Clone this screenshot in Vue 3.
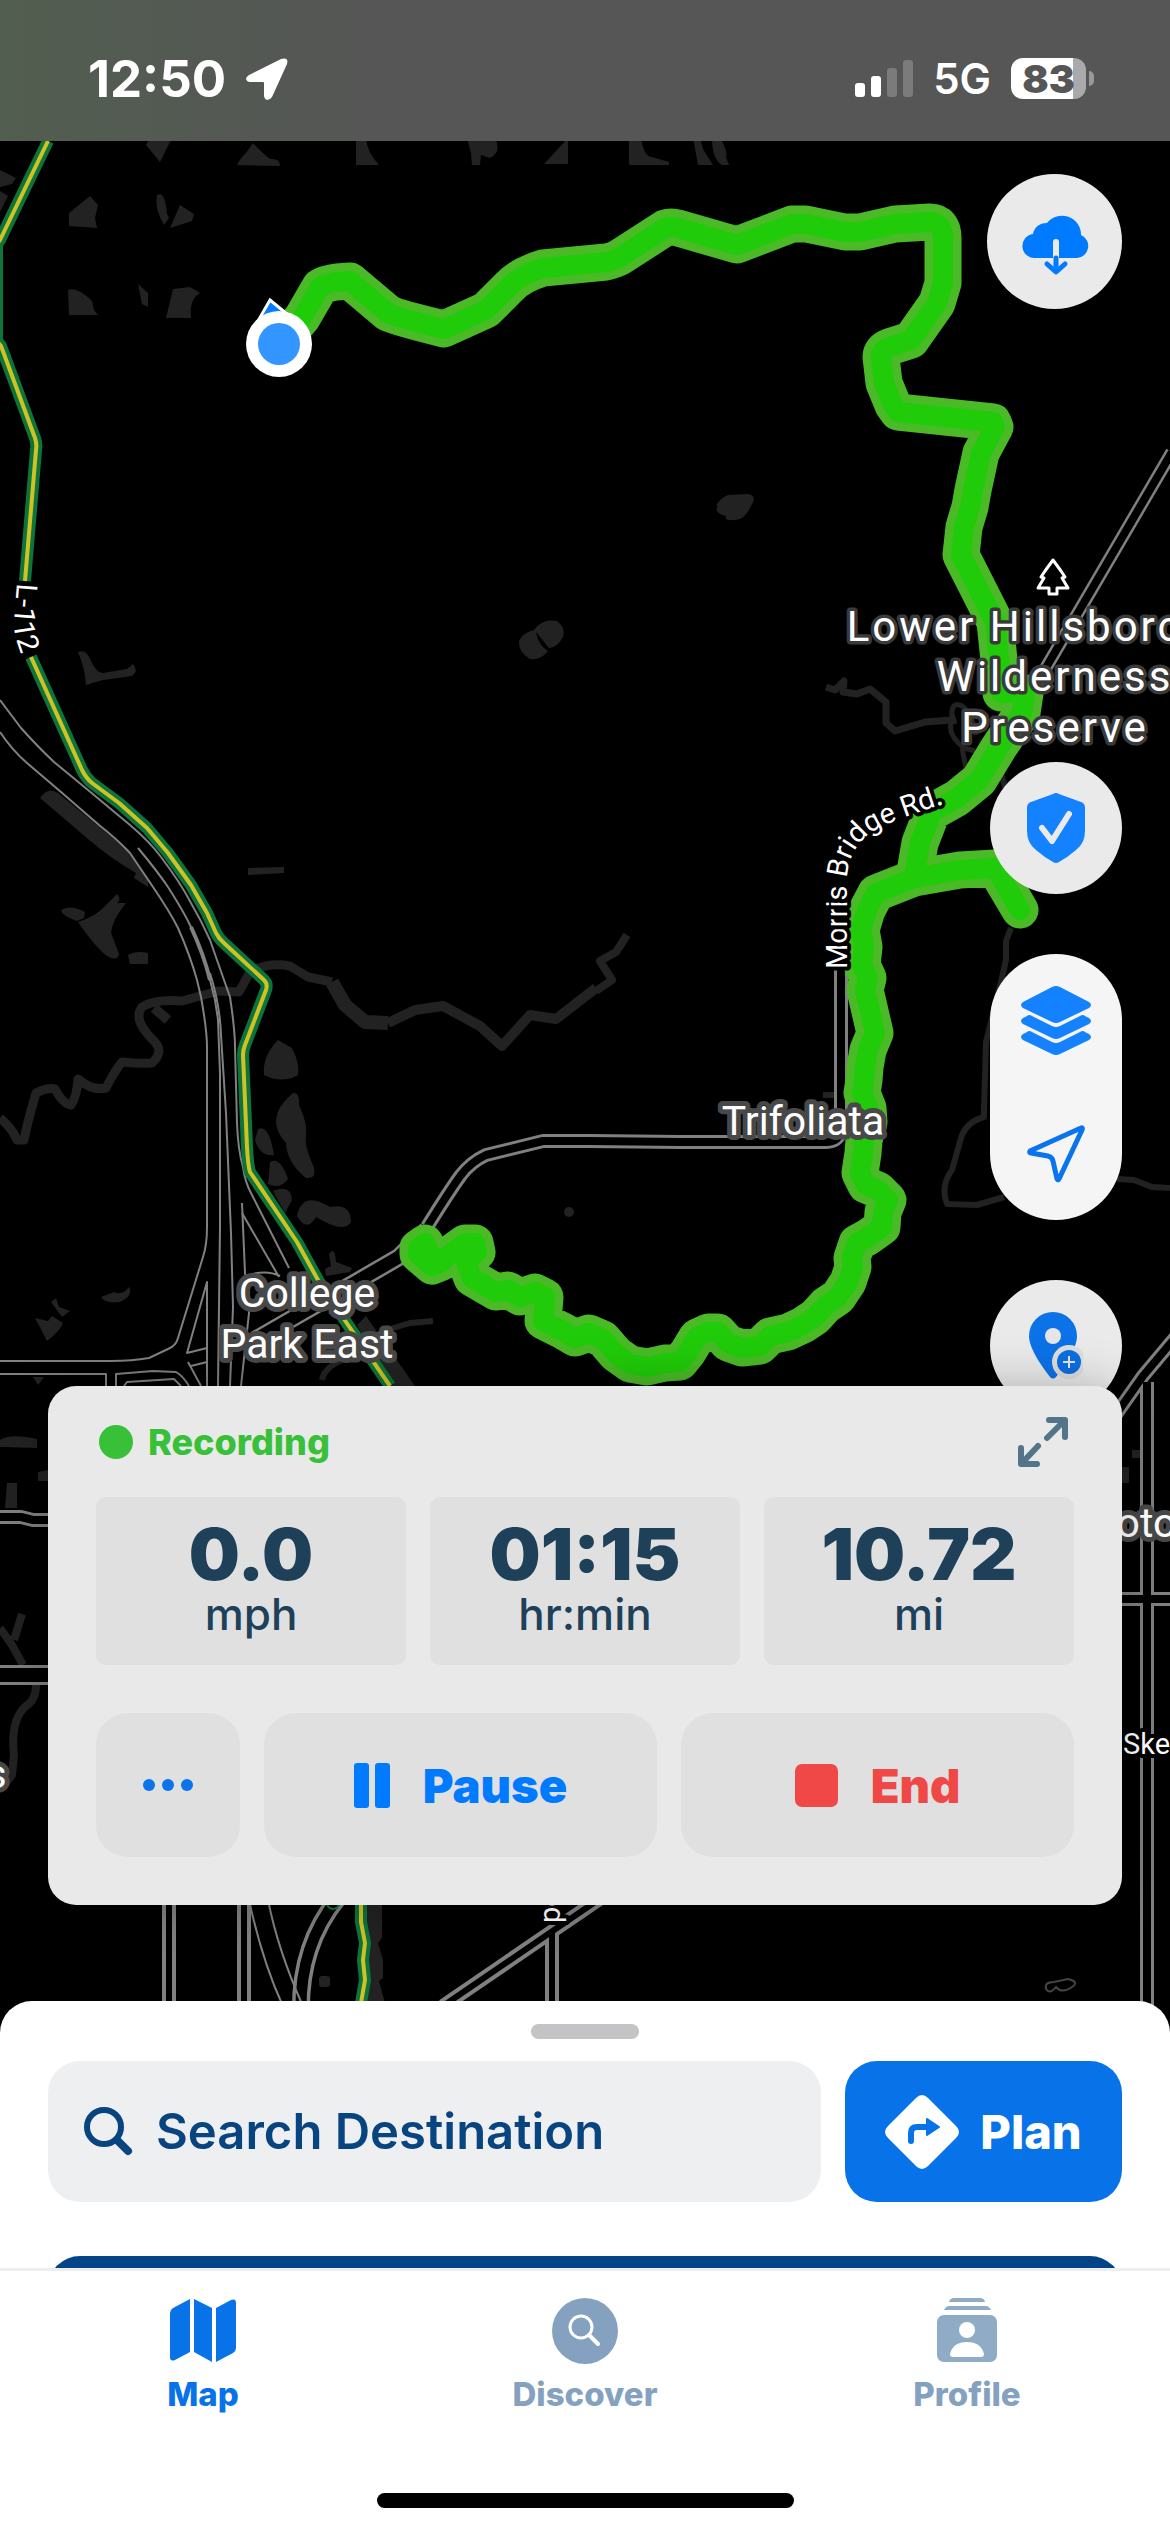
<script setup>
import { ref } from 'vue'

const destination = ref('')

const stats = [
  { value: '0.0', unit: 'mph' },
  { value: '01:15', unit: 'hr:min' },
  { value: '10.72', unit: 'mi' },
]

const track =
  'M1020 910 L995 868 L960 870 L914 878 L876 893 L867 910 L861 930 L864 947 L862 965 L868 978 L865 990 L869 1007 L875 1033 L868 1050 L865 1067 L864 1080 L862 1093 L868 1108 L869 1122 L864 1140 L863 1153 L860 1173 L866 1185 L878 1190 L888 1200 L883 1212 L882 1227 L868 1237 L857 1243 L852 1258 L853 1267 L848 1282 L838 1297 L826 1305 L815 1317 L803 1325 L788 1332 L770 1336 L760 1346 L742 1348 L728 1343 L718 1332 L708 1332 L697 1337 L688 1352 L680 1362 L665 1363 L647 1367 L630 1364 L616 1354 L603 1339 L589 1333 L575 1338 L563 1331 L543 1321 L545 1297 L535 1292 L520 1297 L508 1290 L496 1292 L472 1278 L466 1262 L477 1252 L475 1243 L465 1243 L447 1256 L442 1262 L432 1266 L418 1254 L418 1248 L425 1243 L432 1258'
const trackNorth =
  'M279 344 L302 318 L320 287 Q326 282 350 281 L388 313 Q395 317 444 329 L486 310 L509 287 Q520 275 543 268 L606 262 Q615 260 620 257 L665 228 Q671 226 678 228 L737 245 L792 224 L806 224 L845 232 L860 232 L895 224 L930 222 Q943 222 943 238 L943 283 L937 303 L911 340 L889 347 Q881 350 881 357 L884 383 L893 405 L898 412 L993 422 L995 427 L981 453 L973 490 L970 507 L964 527 L961 555 L995 622 L999 660 L1001 693 L1025 693 L1022 713 L999 747 L979 780 L957 798 L932 812 L920 843 L914 878'
const trail =
  'M48 141 L0 240 Q-3 243 -3 247 V338 Q-3 342 1 346 L35 438 Q37 444 36 450 L25 581'
const trailSouth =
  'M31 657 L82 770 Q86 778 92 783 L119 803 L147 828 L168 853 L191 885 L207 913 L216 933 Q219 939 225 944 L264 980 Q268 984 266 990 L245 1045 Q243 1050 243 1055 L247 1147 Q248 1166 250 1172 L297 1242 L318 1280 L346 1322 L390 1386'
const trailEnd = 'M361 1900 L361 1922 L365 1943 L363 1960 L365 1980 L361 2003'
</script>

<template>
  <div class="app">
    <svg class="map" viewBox="0 0 1170 2532" preserveAspectRatio="xMidYMin slice" aria-label="Map">
      <defs>
        <path id="morris" d="M847 969 V882 Q847 852 868 835 Q884 822 950 802" />
        <path id="l112" d="M17 583 L14 622 Q13 640 32 678" />
      </defs>

      <!-- ponds and woods -->
      <g class="water">
        <path d="M146 145 L150 138 H172 L160 162Z M253 143 Q262 153 270 159 Q280 158 280 166 L237 165 Q241 157 246 153Z M356 138 H366 Q367 152 379 165 H356Z M467 138 H495 Q502 152 490 158 L481 155 L480 165 H472 L471 153Z M568 138 V164 H544Z M629 138 H641 Q644 157 652 157 L669 162 V165 H629Z M693 138 H700 L703 149 L713 165 H698Z M712 138 H720 Q728 151 726 157 L729 165 H722 Q712 159 712 138Z" />
        <path d="M0 170 L16 178 L12 184 L0 187Z M0 191 L8 196 L0 212Z M69 213 L90 196 L98 205 L95 218 L97 228 L69 226Z M157 195 Q165 190 167 214 L169 218 L164 225 Q154 208 157 195Z M180 205 L194 214 L192 221 L170 228Z" />
        <path d="M68 290 Q77 286 92 301 L94 310 L98 315 H69Z M138 284 L148 293 V307 L142 304Z M173 289 L190 287 L200 293 Q189 299 191 318 H166Z" />
        <path d="M78 652 Q86 649 90 659 Q96 673 103 673 L127 669 L133 664 Q139 671 132 676 L103 680 L86 685 Q85 668 78 652Z" />
        <path d="M534 630 Q542 618 557 621 Q566 628 563 637 Q557 648 549 648 L536 632 Q538 645 548 651 Q540 661 530 659 Q518 652 519 641 Q522 633 534 630Z" />
        <path d="M716 505 Q722 497 728 495 L748 494 Q758 496 751 506 Q744 521 734 520 Q724 521 726 516 Q713 513 718 506Z" />
        <path d="M40 798 Q48 786 58 793 L125 848 L148 878 V887 L134 878 L136 873 Q110 858 88 839Z" />
        <path d="M61 910 Q70 904 85 912 L84 918 L77 921 Q62 916 61 910Z M78 922 Q97 916 107 904 L117 894 Q122 899 117 903 H126 Q112 920 111 933 L119 954 Q117 962 107 956 Q95 947 78 922Z M128 955 Q136 950 148 953 V964 H130Z M248 868 L284 867 V873 L248 875Z" />
        <path d="M278 1040 L292 1048 Q300 1064 298 1075 Q282 1084 264 1075 Q262 1056 278 1040Z M293 1093 Q300 1092 299 1105 Q308 1125 306 1135 Q304 1146 313 1165 Q318 1179 306 1178 Q287 1163 286 1143 Q263 1118 293 1093Z M258 1129 Q269 1124 274 1155 Q260 1157 255 1140Z M270 1162 Q280 1156 288 1179 Q280 1190 268 1184Z M273 1191 Q291 1184 292 1200 L285 1213Z M297 1216 Q302 1190 330 1207 Q351 1203 351 1222 Q345 1232 325 1222 L316 1217 Q307 1233 297 1216Z" />
        <path d="M329 1254 Q335 1245 336 1262 L352 1268 L350 1272 L326 1276 L325 1269 L331 1266Z M101 1297 L114 1292 Q122 1296 129 1287 Q134 1295 120 1302 Q105 1304 101 1297Z M51 1302 L56 1298 L59 1307 L70 1311 L62 1317Z M35 1318 L48 1321 L52 1316 L63 1323 Q60 1331 47 1341Z M33 1377 H44 L38 1385Z M357 1325 L366 1316 L415 1386 H389Z" />
        <circle cx="569" cy="1212" r="5" />
        <path d="M823 1092 H834 V1098 H823Z M0 1440 Q10 1433 37 1439 V1448 L0 1447Z M38 1472 L48 1470 V1481 H38Z M7 1483 H17 V1508 H5Z M1132 1450 h10 v8 h-10Z M1122 1467 h7 v16 h-7Z M367 1905 H382 L382 1938 L378 1943 L383 1960 L383 1978 L379 1981 L385 2003 H367Z" />
        <rect x="319" y="1976" width="11" height="11" rx="3" />
      </g>
      <g class="creek">
        <path stroke-width="9" d="M0 1118 Q12 1128 17 1140 H24 Q27 1124 36 1093 Q48 1087 55 1089 Q63 1104 71 1105 Q77 1096 78 1079 Q92 1091 106 1088 Q114 1072 122 1062 Q140 1064 152 1063 Q164 1052 155 1042 Q132 1020 142 1007 Q155 999 182 1001 L218 991 L239 992 L250 972 Q268 962 290 966 L308 977 L332 982" />
        <path stroke-width="14" d="M332 982 L345 1005 L365 1022 L388 1023" />
        <path stroke-width="10" d="M388 1023 L415 1010 L443 1006 L480 1026 L502 1046 L530 1015 L556 1019 L596 988 M154 1008 L168 1020" />
        <path stroke-width="8" d="M596 991 L612 980 L600 961 L616 952 L627 935" />
        <path stroke-width="7" d="M826 687 L835 690 L844 681 L843 692 L857 694 L870 689 L886 702 L886 723 L895 731 L925 722 L952 720" />
        <path stroke-width="5" d="M952 720 Q950 700 962 706 Q972 713 976 735 M952 720 Q946 734 964 748 L975 751 M952 714 L955 724 M962 748 L966 768" />
        <path stroke-width="6" d="M1000 770 L1006 790 M1011 928 L1006 941 L1006 960 L1001 982 L986 1042 L984 1110 L984 1117 Q966 1122 961 1138 L952 1170 Q940 1186 947 1204 L977 1205 L1004 1197 M1117 1179 L1134 1180 L1152 1187 L1170 1188" />
        <path stroke-width="6" d="M387 1330 L410 1323 L433 1321 M322 1380 Q324 1368 342 1360" />
        <path stroke-width="8" d="M0 1628 L12 1645 L23 1665 M14 1640 L22 1614 M36 1685 Q36 1700 26 1706 Q10 1720 14 1755 L12 1775 L0 1790" />
      </g>
      <path class="islet" d="M1046 1989 Q1044 1982 1054 1982 L1068 1979 Q1080 1982 1072 1987 Q1062 1994 1056 1987 Q1050 1995 1046 1989Z" />

      <!-- two-lane roads: casing then core -->
      <g class="casing">
        <path stroke-width="14" d="M841 960 V1128 Q840 1142 826 1142 H681 L589 1141 H543 L486 1155 Q471 1162 461 1175 Q450 1190 427 1227" />
        <path stroke-width="18" d="M427 1230 L399 1257 L356 1282 L300 1314 L255 1340" />
        <path stroke-width="13" d="M1172 452 L1030 695" />
        <path stroke-width="14" d="M0 1517 H21 L33 1520 H60 M1110 1599 H1180 M1147 2010 V1382 M169 1890 V2010 M244 1890 V2010" />
        <path stroke-width="14" d="M1180 1332 L1143 1376 L1112 1420" />
        <path stroke-width="20" d="M0 1675 H60" />
        <path stroke-width="18" d="M338 1898 Q300 1945 301 2010" />
        <path stroke-width="14" d="M552 2010 V1931 M620 1885 L557 1928 L443 2006" />
      </g>
      <g class="core">
        <path stroke-width="8" d="M841 958 V1128 Q840 1142 826 1142 H681 L589 1141 H543 L486 1155 Q471 1162 461 1175 Q450 1190 427 1227" />
        <path stroke-width="13" d="M427 1230 L399 1257 L356 1282 L300 1314 L255 1340" />
        <path stroke-width="8" d="M1172 452 L1030 695" />
        <path stroke-width="8" d="M0 1517 H21 L33 1520 H60 M1110 1599 H1180 M1147 2010 V1382" />
        <path stroke-width="6" d="M169 1890 V2010 M244 1890 V2010" />
        <path stroke-width="8" d="M1180 1332 L1143 1376 L1112 1420" />
        <path stroke-width="14" d="M0 1675 H60" />
        <path stroke-width="11" d="M338 1898 Q300 1945 301 2010" />
        <path stroke-width="6" d="M552 2010 V1931 M620 1885 L557 1928 L443 2006" />
      </g>

      <!-- interstate carriageways -->
      <g class="lines">
        <path d="M0 700 L21 728 Q38 747 54 762 L88 790 L130 825 Q150 842 161 857 Q180 882 191 903 Q202 922 210 940 L224 980 L230 997 Q235 1030 235 1047 L237 1123 Q238 1150 243 1167 Q245 1182 251 1193 L289 1268" />
        <path d="M0 732 Q12 750 27 763 L61 792 L99 825 Q118 840 130 853 L153 887 Q170 912 178 928 Q190 955 197 980 L201 997 Q207 1030 207 1047 V1227 Q207 1245 203 1257 L178 1338 Q176 1346 168 1349 L149 1358 Q132 1361 111 1361 H0" />
        <path d="M138 848 Q158 872 168 887 Q184 912 191 927 Q204 955 210 980 Q216 1000 218 1020 L220 1073 V1227 L218 1386" />
        <path stroke-width="4" d="M191 927 Q204 955 210 980" />
        <path d="M210 973 Q220 1005 221 1035 L226 1113 L231 1233 L233 1307 L230 1386" />
        <path d="M242 1203 L245 1273 L249 1313 L241 1386" />
        <path d="M242 1213 L279 1277 M207 1386 V1282 L187 1353 L207 1348 M252 1274 Q268 1270 280 1276" />
        <path d="M0 1374 H106 V1386 M116 1386 V1374 L153 1371 L176 1372 Q183 1376 189 1386 M124 1386 L127 1382 L174 1379 L181 1386 M188 1362 L201 1386 M191 1366 L207 1362" />
        <path d="M249 1900 Q262 1960 282 2004 M268 1900 Q278 1950 302 2004" />
      </g>

      <g class="trail">
        <path :d="trail" /><path :d="trailSouth" /><path :d="trailEnd" />
        <circle cx="333" cy="1903" r="1" />
      </g>
      <g class="trail-mid">
        <path :d="trail" /><path :d="trailSouth" /><path :d="trailEnd" />
      </g>

      <g class="track-edge"><path :d="trackNorth" /><path :d="track" /></g>
      <g class="track-core"><path :d="trackNorth" /><path :d="track" /></g>

      <!-- current position -->
      <path d="M270 300 L292 318 L254 328Z" fill="#0a7aff" stroke="#fff" stroke-width="3" />
      <circle cx="279" cy="344" r="33" fill="#fff" />
      <circle cx="279" cy="344" r="21" fill="#3395ff" />

      <path class="tree" d="M1053 560 L1045 571 L1041 577 L1044 578 L1038 588 H1049 V594 H1057 V588 H1068 L1062 578 L1065 577 L1061 571Z" />

      <g class="road-label">
        <text><textPath href="#morris">Morris Bridge Rd.</textPath></text>
        <text><textPath href="#l112">L-112</textPath></text>
        <text x="1123" y="1754">Skewlee</text>
        <text transform="translate(560 1923) rotate(-90)">po</text>
      </g>
      <g class="park-label">
        <text x="1055" y="641">Lower Hillsborough</text>
        <text x="1055" y="691">Wilderness</text>
        <text x="1055" y="742">Preserve</text>
      </g>
      <g class="place-label">
        <text x="803" y="1135">Trifoliata</text>
        <text x="307" y="1307">College</text>
        <text x="307" y="1358">Park East</text>
        <text x="1157" y="1537">otos</text>
        <text x="-4" y="1788">s</text>
      </g>
    </svg>

    <header class="status">
      <div class="status-group time">
        <span>12:50</span>
        <svg width="42" height="42" viewBox="0 0 42 42" fill="#fff">
          <path d="M35 1 L3 17 Q0 19 0 21 Q1 24 4 24 H17 Q18 24 18 25 V37 Q18 41 21 42 Q24 42 26 39 L41 6 Q43 -1 35 1Z" />
        </svg>
      </div>
      <div class="status-group">
        <svg width="58" height="38" viewBox="0 0 58 38" fill="#fff">
          <rect y="23" width="10" height="14" rx="3" />
          <rect x="16" y="16" width="10" height="21" rx="3" />
          <rect x="32" y="8" width="10" height="29" rx="3" opacity=".22" />
          <rect x="48" width="10" height="37" rx="3" opacity=".22" />
        </svg>
        <span class="net">5G</span>
        <span class="battery"><b>83</b></span>
      </div>
    </header>

    <main class="overlay">
      <button class="round cloud" aria-label="Download map">
        <svg width="72" height="72" viewBox="0 0 72 72">
          <path fill="#007aff" d="M17 52 A12 12 0 0 1 14 28 A13 13 0 0 1 28 17 A19 19 0 0 1 62 29 A12 12 0 0 1 58 52Z" />
          <path d="M37 36 V52" stroke="#eaeaea" stroke-width="6" stroke-linecap="round" />
          <path d="M37 52 V65 M28 58 L37 66 L46 58" fill="none" stroke="#007aff" stroke-width="5" stroke-linecap="round" stroke-linejoin="round" />
        </svg>
      </button>

      <button class="round shield" aria-label="Safety">
        <svg width="58" height="70" viewBox="0 0 58 70">
          <path fill="#1481ff" d="M26 1 Q29 -1 32 1 L54 9 Q58 10 58 15 V38 Q58 50 49 57 Q41 64 32 69 Q29 71 26 69 Q17 64 9 57 Q0 50 0 38 V15 Q0 10 4 9Z" />
          <path d="M15 35 L25 48 L42 21" fill="none" stroke="#eaeaea" stroke-width="6" stroke-linecap="round" stroke-linejoin="round" />
        </svg>
      </button>

      <div class="pill">
        <button aria-label="Map layers">
          <svg width="70" height="70" viewBox="0 0 70 70" fill="#1481ff">
            <path d="M31 1 Q35 -1 39 1 L68 16 Q72 19 68 22 L39 36 Q35 38 31 36 L2 22 Q-2 19 2 16Z" />
            <path id="sheet-layer" d="M6 30 Q8 28 11 30 L31 40 Q35 42 39 40 L59 30 Q62 28 64 30 L68 32 Q72 35 68 38 L39 52 Q35 54 31 52 L2 38 Q-2 35 2 32Z" />
            <use href="#sheet-layer" y="16" />
          </svg>
        </button>
        <button aria-label="Center on my location">
          <svg width="58" height="58" viewBox="0 0 58 58">
            <path d="M54 3 L3 26 Q2 28 4 28 L21 31 Q25 32 26 36 L30 54 Q31 56 32 54 L55 5 Q56 2 54 3Z" fill="none" stroke="#0a74ee" stroke-width="5" stroke-linejoin="round" />
          </svg>
        </button>
      </div>

      <button class="round pin" aria-label="Add waypoint">
        <svg width="54" height="68" viewBox="0 0 54 68">
          <path fill="#0b72e7" d="M24 0 A24 24 0 0 1 48 24 Q48 38 27 65 Q24 68 21 65 Q0 38 0 24 A24 24 0 0 1 24 0Z" />
          <circle cx="24" cy="24" r="8" fill="#e6e6e6" />
          <circle cx="40" cy="50" r="17" fill="#dedede" />
          <circle cx="40" cy="50" r="12" fill="#0b6fe2" />
          <path d="M34 50 H46 M40 44 V56" stroke="#e6e6e6" stroke-width="2" />
        </svg>
      </button>

      <section class="panel">
        <div class="panel-head">
          <span class="dot"></span>
          <h2>Recording</h2>
          <button class="expand" aria-label="Expand">
            <svg width="50" height="50" viewBox="0 0 50 50" fill="none" stroke="#54748a" stroke-width="6" stroke-linecap="round" stroke-linejoin="round">
              <path d="M29 21 L46 4 M31 3 H47 V20 M20 29 L4 46 M3 31 V47 H19" />
            </svg>
          </button>
        </div>
        <div class="stats">
          <div v-for="s in stats" :key="s.unit" class="stat">
            <strong>{{ s.value }}</strong>
            <span>{{ s.unit }}</span>
          </div>
        </div>
        <div class="actions">
          <button class="more" aria-label="More">
            <svg width="50" height="12" viewBox="0 0 50 12" fill="#0a74e8">
              <circle cx="6" cy="6" r="6" /><circle cx="25" cy="6" r="6" /><circle cx="44" cy="6" r="6" />
            </svg>
          </button>
          <button class="pause">
            <svg width="36" height="45" viewBox="0 0 36 45" fill="currentColor">
              <rect width="15" height="45" rx="3" /><rect x="21" width="15" height="45" rx="3" />
            </svg>
            Pause
          </button>
          <button class="end">
            <svg width="43" height="43" viewBox="0 0 43 43" fill="currentColor"><rect width="43" height="43" rx="7" /></svg>
            End
          </button>
        </div>
      </section>
    </main>

    <section class="sheet">
      <div class="handle"></div>
      <div class="search-row">
        <label class="search">
          <svg width="50" height="50" viewBox="0 0 50 50" fill="none" stroke="#084480" stroke-linecap="round">
            <circle cx="20" cy="20" r="17" stroke-width="6" />
            <path d="M33 33 L44 44" stroke-width="8" />
          </svg>
          <input v-model="destination" type="text" placeholder="Search Destination" aria-label="Search Destination" />
        </label>
        <button class="plan">
          <svg width="74" height="74" viewBox="0 0 74 74">
            <path fill="#fff" d="M31 3 Q37 -3 43 3 L71 31 Q77 37 71 43 L43 71 Q37 77 31 71 L3 43 Q-3 37 3 31Z" />
            <path d="M26 46 V38 Q26 32 32 32 H43" fill="none" stroke="#0873e8" stroke-width="6" stroke-linecap="round" />
            <path d="M42 24 L54 32 L42 40Z" fill="#0873e8" stroke="#0873e8" stroke-width="2" stroke-linejoin="round" />
          </svg>
          Plan
        </button>
      </div>
      <div class="peek"><div class="card"></div></div>
    </section>

    <footer class="tabs">
      <nav>
        <a href="#map" class="active">
          <svg width="66" height="64" viewBox="0 0 66 64" fill="currentColor">
            <path d="M20 1 V54 L5 62 Q0 64 0 59 V15 Q0 12 3 10Z" />
            <path d="M24 1 L42 10 V64 L24 54Z" />
            <path d="M46 10 L61 2 Q66 0 66 5 V50 Q66 53 63 55 L46 64Z" />
          </svg>
          Map
        </a>
        <a href="#discover">
          <svg width="66" height="66" viewBox="0 0 66 66">
            <circle cx="33" cy="33" r="33" fill="currentColor" />
            <circle cx="29" cy="29" r="11" fill="none" stroke="#fff" stroke-width="3" />
            <path d="M37 37 L46 46" stroke="#fff" stroke-width="4" stroke-linecap="round" />
          </svg>
          Discover
        </a>
        <a href="#profile">
          <svg width="60" height="64" viewBox="0 0 60 64" fill="#90abc6">
            <path d="M12 4 Q13 0 17 0 H43 Q47 0 48 4Z M7 12 Q9 8 12 8 H49 Q52 8 54 12Z" />
            <rect y="17" width="60" height="47" rx="7" />
            <circle cx="30" cy="32" r="8" fill="#fff" />
            <path d="M13 56 Q16 44 30 44 Q44 44 47 56 Q47 59 44 59 H16 Q13 59 13 56Z" fill="#fff" />
          </svg>
          Profile
        </a>
      </nav>
      <div class="home"></div>
    </footer>
  </div>
</template>

<style>
body {
  background: #000;
}
</style>

<style scoped>
.app {
  position: relative;
  display: flex;
  flex-direction: column;
  min-height: 100vh;
  overflow: hidden;
  background: #000;
  font-family: Inter, "Liberation Sans", sans-serif;
}
button {
  display: flex;
  align-items: center;
  justify-content: center;
  padding: 0;
  border: 0;
  background: none;
  font: inherit;
  cursor: pointer;
}

/* map artwork */
.map {
  position: absolute;
  inset: 0;
  width: 100%;
  height: 100%;
}
.water { fill: #222; }
.creek,
.casing,
.core,
.lines,
.trail,
.trail-mid,
.track-edge,
.track-core {
  fill: none;
  stroke-linejoin: round;
}
.creek { stroke: #222; }
.islet {
  fill: none;
  stroke: #444;
  stroke-width: 2px;
}
.casing { stroke: #808080; }
.core { stroke: #000; }
.lines {
  stroke: #808080;
  stroke-width: 2px;
}
.trail {
  stroke: #0b753c;
  stroke-width: 12px;
}
.trail-mid {
  stroke: #d0c224;
  stroke-width: 4px;
}
.track-edge {
  stroke: #4aba26;
  stroke-width: 37px;
  stroke-linecap: round;
}
.track-core {
  stroke: #20cb09;
  stroke-width: 20px;
  stroke-linecap: round;
}
.tree {
  fill: #000;
  stroke: #fff;
  stroke-width: 3px;
  stroke-linejoin: round;
}
.road-label,
.park-label,
.place-label {
  fill: #fff;
  font-family: Roboto, "Liberation Sans", sans-serif;
  paint-order: stroke;
  stroke-linejoin: round;
}
.road-label {
  font-size: 29px;
  stroke: #000;
  stroke-width: 8px;
}
.park-label {
  font-size: 42px;
  letter-spacing: 3px;
  text-anchor: middle;
  stroke: #3a3a3a;
  stroke-width: 7px;
}
.place-label {
  font-size: 41px;
  text-anchor: middle;
  stroke: #484848;
  stroke-width: 10px;
}

/* status bar */
.status {
  position: relative;
  display: flex;
  justify-content: space-between;
  align-items: center;
  height: 141px;
  padding: 16px 84px 0 88px;
  box-sizing: border-box;
  background: linear-gradient(90deg, #525e50, #545754 26%, #565656 34%, #565656);
  color: #fff;
}
.status-group {
  display: flex;
  align-items: center;
}
.time {
  gap: 20px;
  font-size: 51px;
  font-weight: 700;
}
.net {
  margin-left: 20px;
  font-size: 42px;
  font-weight: 600;
}
.battery {
  position: relative;
  margin-left: 20px;
  width: 75px;
  height: 41px;
  border-radius: 12px;
  background: linear-gradient(90deg, #fff 62px, #aaa 62px);
  color: #565656;
  font-size: 39px;
  line-height: 41px;
  text-align: center;
}
.battery b { font-weight: 900; }
.battery::after {
  content: "";
  position: absolute;
  left: 78px;
  top: 13px;
  width: 5px;
  height: 15px;
  border-radius: 0 8px 8px 0;
  background: #999;
}

/* floating controls */
.overlay {
  position: relative;
  display: flex;
  flex: 1;
  flex-direction: column;
  align-items: flex-end;
  padding: 33px 48px 96px;
}
.round {
  width: 132px;
  height: 132px;
  flex: none;
  border-radius: 50%;
  background: #eaeaea;
}
.round.cloud {
  width: 135px;
  height: 135px;
}
.round.shield { margin-top: auto; }
.round.pin {
  margin: 60px 0 -26px;
}
.pill {
  display: flex;
  flex-direction: column;
  width: 132px;
  margin-top: 60px;
  border-radius: 66px;
  background: #f5f5f5;
}
.pill button { height: 133px; }

/* recording panel */
.panel {
  position: relative;
  align-self: stretch;
  padding: 24px 48px 48px;
  border-radius: 28px;
  background: #e9e9e9;
  box-shadow: 0 0 48px rgba(0, 0, 0, 0.25);
}
.panel-head {
  display: flex;
  align-items: center;
  height: 63px;
  margin-bottom: 24px;
}
.dot {
  width: 34px;
  height: 34px;
  margin-left: 3px;
  border-radius: 50%;
  background: #38c038;
}
h2 {
  margin: 0 auto 0 15px;
  color: #38c038;
  font-size: 36px;
  font-weight: 800;
}
.expand { margin-right: 6px; }
.stats,
.actions {
  display: flex;
  gap: 24px;
}
.stat {
  display: flex;
  flex: 1;
  flex-direction: column;
  align-items: center;
  padding: 21px 0 27px;
  border-radius: 10px;
  background: #e0e0e1;
  color: #1e4159;
}
.stat strong {
  font-size: 72px;
  font-weight: 900;
  line-height: 72px;
}
.stat span {
  font-size: 44px;
  font-weight: 500;
  line-height: 48px;
}
.actions { margin-top: 48px; }
.actions button {
  flex: 1;
  height: 144px;
  gap: 33px;
  border-radius: 32px;
  background: #e0e0e1;
  font-size: 47px;
  font-weight: 900;
}
.actions .more { flex: 0 0 144px; }
.actions .pause { color: #007aff; }
.actions .end { color: #f04846; }

/* bottom sheet */
.sheet {
  position: relative;
  padding: 23px 48px 0;
  border-radius: 32px 32px 0 0;
  background: #fff;
}
.handle {
  width: 108px;
  height: 15px;
  margin: 0 auto 22px;
  border-radius: 8px;
  background: #c4c4c6;
}
.search-row {
  display: flex;
  gap: 24px;
}
.search {
  display: flex;
  flex: 1;
  align-items: center;
  gap: 22px;
  min-width: 0;
  height: 141px;
  padding: 0 36px;
  box-sizing: border-box;
  border-radius: 32px;
  background: #eeeff1;
}
.search input {
  flex: 1;
  min-width: 0;
  padding: 0;
  border: 0;
  outline: 0;
  background: none;
  color: #084480;
  font: 600 49px Inter, "Liberation Sans", sans-serif;
}
.search input::placeholder {
  color: #084480;
  opacity: 1;
}
.plan {
  width: 277px;
  gap: 21px;
  border-radius: 32px;
  background: #0873e8;
  color: #fff;
  font-size: 47px;
  font-weight: 800;
}
.peek {
  height: 12px;
  margin-top: 54px;
  overflow: hidden;
}
.card {
  height: 96px;
  border-radius: 32px;
  background: #034489;
}

/* tab bar */
.tabs {
  position: relative;
  padding: 27px 12px 24px;
  border-top: 3px solid #ededf2;
  background: #fff;
}
nav { display: flex; }
nav a {
  display: flex;
  flex: 1;
  flex-direction: column;
  align-items: center;
  justify-content: space-between;
  height: 116px;
  color: #84a2c0;
  font-size: 33px;
  font-weight: 800;
  line-height: 40px;
  text-decoration: none;
}
nav a.active { color: #0873e8; }
.home {
  width: 417px;
  height: 15px;
  margin: 79px auto 0;
  border-radius: 8px;
  background: #000;
}
</style>
